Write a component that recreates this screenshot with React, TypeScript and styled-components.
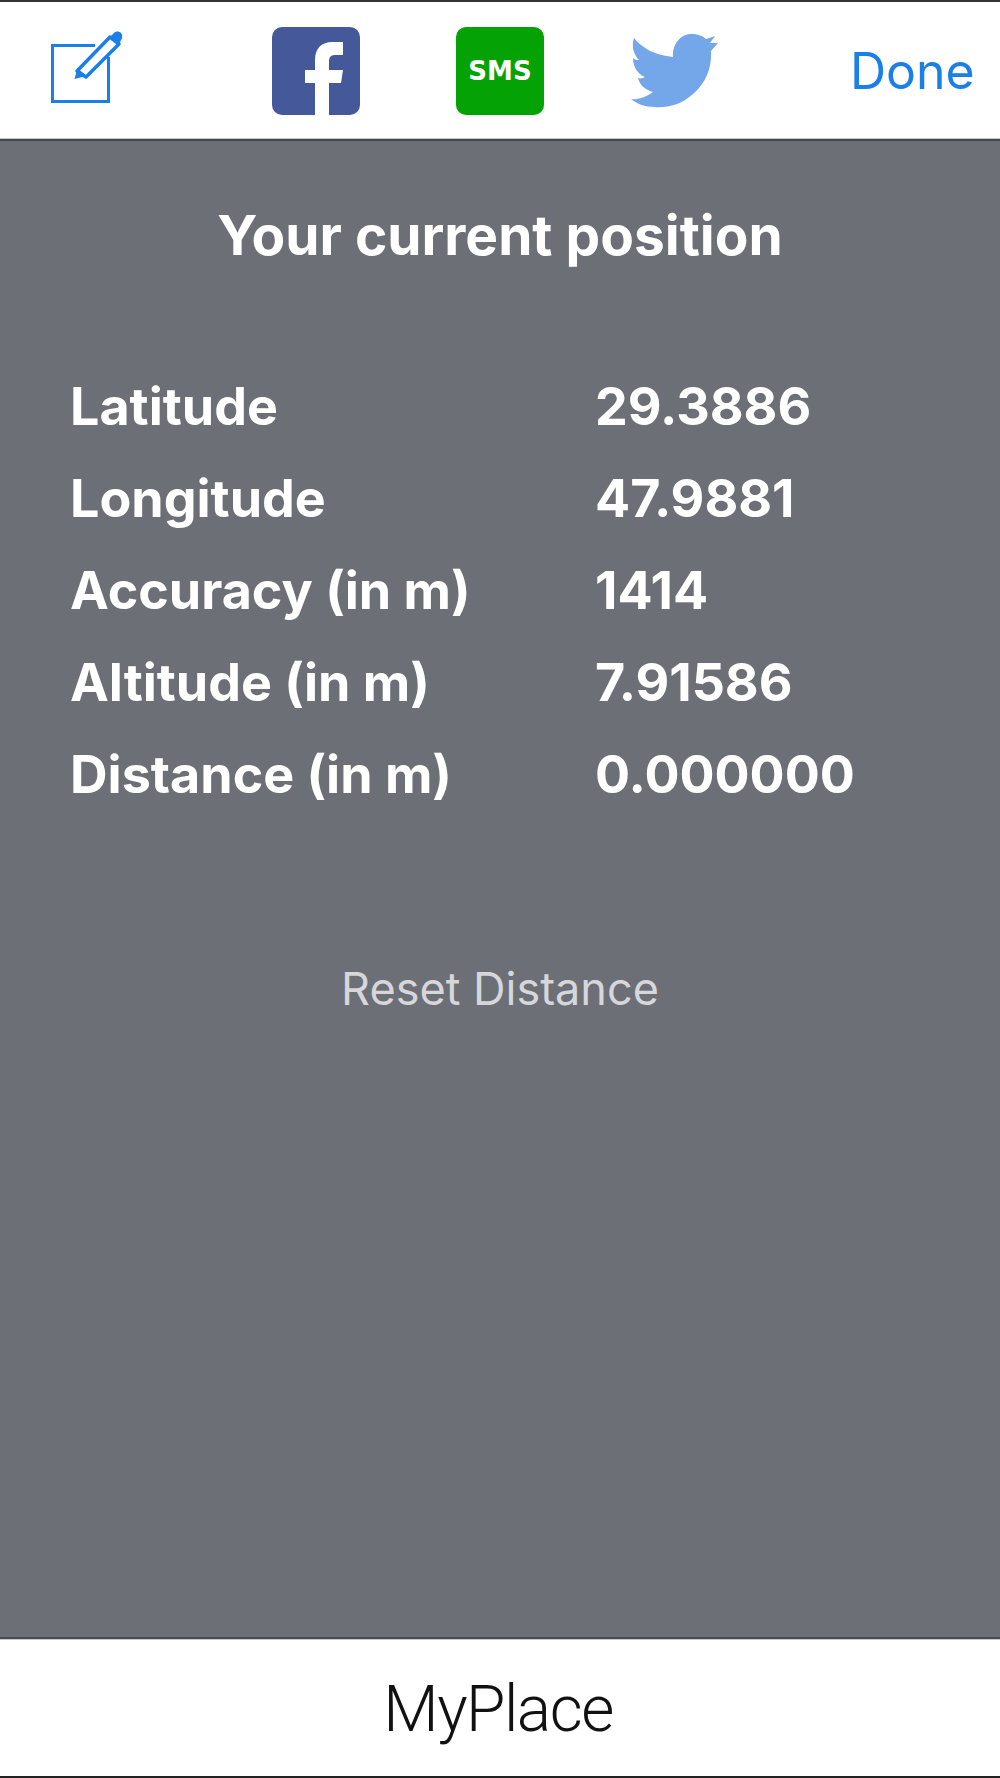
import React from "react";
import styled, { createGlobalStyle } from "styled-components";

const Global = createGlobalStyle`
  html, body { margin: 0; padding: 0; background: #fff; }
  #root { width: 1000px; height: 1778px; }
`;

const Page = styled.div`
  width: 1000px;
  height: 1778px;
  display: flex;
  flex-direction: column;
  font-family: Inter, "Liberation Sans", sans-serif;
  overflow: hidden;
`;

const Toolbar = styled.header`
  height: 141px;
  flex: none;
  box-sizing: border-box;
  padding-top: 1px;
  border-top: 2px solid #333;
  border-bottom: 2px solid #47484d;
  box-shadow: inset 0 -1px 0 #c8c8cc;
  background: #fff;
  display: grid;
  grid-template-columns: 50px 72px 150px 88px 96px 88px 87px 87px 132px auto;
  align-items: center;
`;

const Cell = styled.div<{ $col: number }>`
  grid-column: ${(p) => p.$col};
  grid-row: 1;
  display: flex;
  align-items: center;
  justify-content: center;
`;

const Done = styled.div`
  grid-column: 10;
  grid-row: 1;
  font-size: 50px;
  color: #1a7fe6;
  font-weight: 400;
`;

const Body = styled.main`
  flex: 1;
  background: #6d6f77;
  color: #fff;
  display: flex;
  flex-direction: column;
  align-items: stretch;
`;

const Title = styled.h1`
  margin: 64px 0 0;
  text-align: center;
  font-size: 55px;
  line-height: 60px;
  font-weight: 700;
`;

const Table = styled.div`
  margin: 95px 0 0 70px;
  display: grid;
  grid-template-columns: 525px auto;
  grid-auto-rows: 92px;
  align-items: center;
  font-size: 52px;
  font-weight: 700;
`;

const Reset = styled.div`
  margin-top: 142px;
  text-align: center;
  font-size: 45px;
  line-height: 54px;
  font-weight: 400;
  color: #d6d7db;
`;

const Footer = styled.footer`
  height: 141px;
  flex: none;
  box-sizing: border-box;
  padding: 4px 4px 0 0;
  border-top: 2px solid #4a4b50;
  border-bottom: 2px solid #222;
  box-shadow: inset 0 1px 0 #c8c8cc;
  background: #fff;
  display: flex;
  align-items: center;
  justify-content: center;
  font-family: Roboto, "Liberation Sans", sans-serif;
  font-weight: 300;
  font-size: 64px;
  letter-spacing: -1.5px;
  color: #111;
`;

const rows = [
  ["Latitude", "29.3886"],
  ["Longitude", "47.9881"],
  ["Accuracy (in m)", "1414"],
  ["Altitude (in m)", "7.91586"],
  ["Distance (in m)", "0.000000"],
];

const Compose = () => (
  <svg width="72" height="88" viewBox="0 0 72 88">
    <path d="M45 18.500H2.500v56h56V30" fill="none" stroke="#1a7fe6" strokeWidth="3" />
    <path d="M27 44L60 10l9 7-33 33z" fill="#fff" stroke="#1a7fe6" strokeWidth="3.5" strokeLinejoin="round" />
    <path d="M24.500 52l3-11 8.500 8z" fill="#1a7fe6" />
    <path d="M60 10l4-4c2-2 5-2 7 0s2 5 0 7l-2 5z" fill="#1a7fe6" />
  </svg>
);

const Facebook = () => (
  <svg width="88" height="88" viewBox="0 0 88 88">
    <rect width="88" height="88" rx="10" fill="#45599a" />
    <path d="M43 88V56H33V43h10V33c0-12 7-18 17-18h11v13h-8c-5 0-6 3-6 7v8h14l-2 13H57v32z" fill="#fff" />
  </svg>
);

const Sms = () => (
  <svg width="88" height="88" viewBox="0 0 88 88">
    <rect width="88" height="88" rx="10" fill="#04a204" />
    <text x="44" y="53" textAnchor="middle" fontFamily="'DejaVu Sans', sans-serif" fontWeight="700" fontSize="26" fill="#fff">SMS</text>
  </svg>
);

const Twitter = () => (
  <svg width="87" height="74" viewBox="0 0 87 74">
    <path d="M3 4C12 15 24 21 42 23 41 10 50 0 60 0 67 0 72 2 75 5L84 2 79 9 87 9 80 17C81 35 74 50 62 60 50 71 36 74 24 73 14 73 6 70 0 65 5 66 14 64 22 58 15 56 9 52 7 44 10 45 12 44 14 43 8 41 2 34 2 24 4 26 6 26 8 26 3 21 0 12 3 4Z" fill="#74a6ea" />
  </svg>
);

export default function App() {
  return (
    <Page>
      <Global />
      <Toolbar>
        <Cell $col={2}><Compose /></Cell>
        <Cell $col={4}><Facebook /></Cell>
        <Cell $col={6}><Sms /></Cell>
        <Cell $col={8}><Twitter /></Cell>
        <Done>Done</Done>
      </Toolbar>
      <Body>
        <Title>Your current position</Title>
        <Table>
          {rows.map(([k, v]) => (
            <React.Fragment key={k}>
              <div>{k}</div>
              <div>{v}</div>
            </React.Fragment>
          ))}
        </Table>
        <Reset>Reset Distance</Reset>
      </Body>
      <Footer>MyPlace</Footer>
    </Page>
  );
}
